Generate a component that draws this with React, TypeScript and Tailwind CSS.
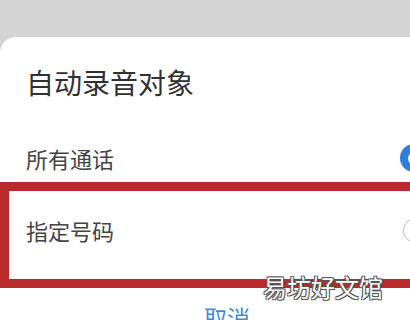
const RadioOn = () => (
  <span className="flex h-[28px] w-[28px] shrink-0 items-center justify-center rounded-full bg-[#2f80dc]">
    <span className="h-[13px] w-[13px] rounded-full bg-white" />
  </span>
);

const RadioOff = () => (
  <span className="h-[25px] w-[25px] shrink-0 rounded-full border-[1.5px] border-[#bdbdbd] bg-white" />
);

const App = () => {
  const options = [
    { label: "所有通话", checked: true },
    { label: "指定号码", checked: false },
  ];

  return (
    <div className="relative h-[320px] w-[410px] overflow-hidden bg-[#d4d4d4] pt-[37px] font-['Noto_Sans_CJK_SC',sans-serif]">
      {/* dialog sheet, wider than the screen */}
      <div className="h-[400px] w-[454px] rounded-tl-[16px] bg-white">
        <div className="pl-[26px] pt-[27px] pb-[22px] text-[28px] leading-[36px] text-[#303030]">
          自动录音对象
        </div>

        {options.map((opt) => (
          <div key={opt.label} className="flex h-[72px] items-center justify-between pl-[26px] pr-[26px]">
            <span className="text-[22px] leading-[30px] text-[#444444]">{opt.label}</span>
            {opt.checked ? <RadioOn /> : <RadioOff />}
          </div>
        ))}

        <div className="pt-[33px] text-center text-[23px] leading-[36px] text-[#3f8ad2]">取消</div>
      </div>

      {/* red highlight box */}
      <div className="absolute left-0 top-[182px] h-[106px] w-[430px] border-[9px] border-[#b82a2c]" />

      {/* watermark */}
      <div className="absolute left-[263px] top-[272px] text-[24px] leading-[30px] text-white [text-shadow:-1px_-1px_0_#555,1px_-1px_0_#555,-1px_1px_0_#555,1px_1px_0_#555]">
        易坊好文馆
      </div>
    </div>
  );
};

export default App;
